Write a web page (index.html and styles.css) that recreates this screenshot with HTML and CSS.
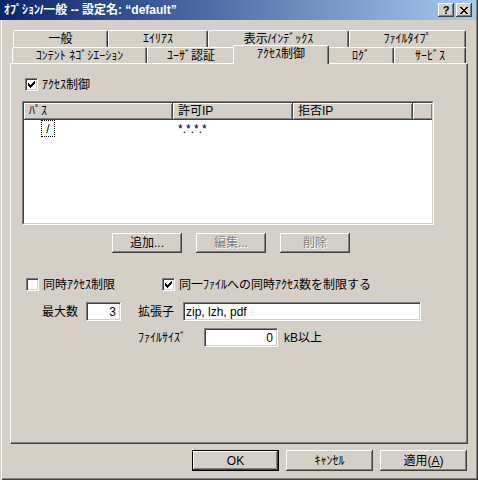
FILE: index.html
```html
<!DOCTYPE html>
<html lang="ja">
<head>
<meta charset="utf-8">
<title>ｵﾌﾟｼｮﾝ/一般</title>
<link rel="stylesheet" href="styles.css">
</head>
<body>
<div class="window">
  <div class="titlebar">
    <span class="title">ｵﾌﾟｼｮﾝ/一般 -- 設定名: “default”</span>
    <div class="tbtns">
      <span class="tbtn">?</span>
      <span class="tbtn"><svg width="8" height="7" viewBox="0 0 8 7" shape-rendering="crispEdges"><path fill="#000" d="M0 0h2v1H0zM6 0h2v1H6zM1 1h2v1H1zM5 1h2v1H5zM2 2h4v1H2zM3 3h2v1H3zM2 4h4v1H2zM1 5h2v1H1zM5 5h2v1H5zM0 6h2v1H0zM6 6h2v1H6z"/></svg></span>
    </div>
  </div>

  <div class="tabs">
    <div class="tabrow row1">
      <div class="tab t-general">一般</div>
      <div class="tab t-alias">ｴｲﾘｱｽ</div>
      <div class="tab t-index">表示/ｲﾝﾃﾞｯｸｽ</div>
      <div class="tab t-ftype">ﾌｧｲﾙﾀｲﾌﾟ</div>
    </div>
    <div class="tabrow row2">
      <div class="tab t-nego">ｺﾝﾃﾝﾄ ﾈｺﾞｼｴｰｼｮﾝ</div>
      <div class="tab t-auth">ﾕｰｻﾞ認証</div>
      <div class="tab t-access selected">ｱｸｾｽ制御</div>
      <div class="tab t-log">ﾛｸﾞ</div>
      <div class="tab t-service">ｻｰﾋﾞｽ</div>
    </div>
  </div>

  <div class="panel">
    <div class="chkrow access-row">
      <span class="box"><svg width="9" height="9" viewBox="0 0 9 9" shape-rendering="crispEdges"><path fill="#000" d="M1 3h1v3H1zM2 4h1v3H2zM3 5h1v3H3zM4 4h1v3H4zM5 3h1v3H5zM6 2h1v3H6zM7 1h1v3H7z"/></svg></span>
      <span>ｱｸｾｽ制御</span>
    </div>

    <div class="listview">
      <div class="lv-in">
        <div class="lv-head">
          <div class="hcol c1">ﾊﾟｽ</div>
          <div class="hcol c2">許可IP</div>
          <div class="hcol c3">拒否IP</div>
          <div class="hcol c4"></div>
        </div>
        <div class="lv-row">
          <div class="cell c1"><span class="focus">/</span></div>
          <div class="cell c2">*.*.*.*</div>
        </div>
      </div>
    </div>

    <div class="btnrow">
      <div class="btn small">追加...</div>
      <div class="btn small disabled">編集...</div>
      <div class="btn small disabled">削除</div>
    </div>

    <div class="optrow">
      <div class="opt opt1">
        <span class="box"></span>
        <span>同時ｱｸｾｽ制限</span>
      </div>
      <div class="opt">
        <span class="box"><svg width="9" height="9" viewBox="0 0 9 9" shape-rendering="crispEdges"><path fill="#000" d="M1 3h1v3H1zM2 4h1v3H2zM3 5h1v3H3zM4 4h1v3H4zM5 3h1v3H5zM6 2h1v3H6zM7 1h1v3H7z"/></svg></span>
        <span>同一ﾌｧｲﾙへの同時ｱｸｾｽ数を制限する</span>
      </div>
    </div>

    <div class="fieldrow">
      <span class="lbl lbl-max">最大数</span>
      <div class="field num f-max">3</div>
      <span class="lbl lbl-ext">拡張子</span>
      <div class="field f-ext">zip, lzh, pdf</div>
    </div>

    <div class="fieldrow row-size">
      <span class="lbl lbl-size">ﾌｧｲﾙｻｲｽﾞ</span>
      <div class="field num f-size">0</div>
      <span class="unit">kB以上</span>
    </div>
  </div>

  <div class="footer">
    <div class="btn big default">OK</div>
    <div class="btn big">ｷｬﾝｾﾙ</div>
    <div class="btn big">適用(<u>A</u>)</div>
  </div>
</div>
</body>
</html>
```

FILE: styles.css
```css
body {
  margin: 0;
  background: #d4d0c8;
  font: 12px/14px "Liberation Sans", "Noto Sans CJK JP", sans-serif;
  color: #000;
}

.window {
  width: 478px;
  height: 480px;
  box-sizing: border-box;
  background: #d4d0c8;
  overflow: hidden;
  display: flow-root;
  box-shadow: inset 1px 0 0 #d4d0c8, inset 2px 0 0 #fff,
              inset -1px -1px 0 #404040, inset -2px -2px 0 #808080;
}

/* title bar */
.titlebar {
  width: 476px;
  height: 20px;
  box-sizing: border-box;
  padding: 0 4px 0 4px;
  display: flex;
  align-items: center;
  background: linear-gradient(to right, #0a246a, #a6caf0);
  color: #fff;
  font-weight: bold;
}
.title { flex: 1; white-space: nowrap; }
.tbtns { display: flex; gap: 2px; }
.tbtn {
  width: 16px;
  height: 14px;
  box-sizing: border-box;
  display: flex;
  align-items: center;
  justify-content: center;
  background: #d4d0c8;
  color: #000;
  font: bold 11px/1 "Liberation Sans", sans-serif;
  box-shadow: inset -1px -1px 0 #404040, inset 1px 1px 0 #fff, inset -2px -2px 0 #808080;
}

/* tabs */
.tabs {
  margin-top: 10px;
  position: relative;
  z-index: 1;
}
.tabrow { display: flex; align-items: flex-start; }
.row1 { margin-left: 13px; height: 17px; }
.row2 { margin-left: 12px; height: 16px; }
.tab {
  box-sizing: border-box;
  display: flex;
  align-items: center;
  justify-content: center;
  white-space: nowrap;
  background: #d4d0c8;
  border-top: 1px solid #fff;
  border-left: 1px solid #fff;
  border-right: 1px solid #404040;
  border-radius: 2px 2px 0 0;
  box-shadow: inset -1px 0 0 #808080;
}
.row1 .tab { height: 17px; }
.row2 .tab { height: 16px; }
.t-general { width: 95px; }
.t-alias { width: 100px; }
.t-index { width: 141px; }
.t-ftype { width: 117px; }
.t-nego { width: 135px; }
.t-auth { width: 88px; }
.t-access { width: 93px; }
.t-log { width: 66px; }
.t-service { width: 72px; }
.row2 .tab.selected {
  width: 96px;
  height: 19px;
  margin: -2px -1px 0 -2px;
  padding-bottom: 2px;
  position: relative;
  z-index: 2;
}

/* panel */
.panel {
  margin-left: 10px;
  width: 458px;
  height: 381px;
  box-sizing: border-box;
  display: flow-root;
  border-top: 1px solid #fff;
  border-left: 1px solid #fff;
  border-right: 1px solid #404040;
  border-bottom: 1px solid #404040;
  box-shadow: inset -1px -1px 0 #808080;
}

.chkrow {
  display: flex;
  align-items: center;
  height: 13px;
  margin: 14px 0 0 14px;
  white-space: nowrap;
}
.box {
  flex: none;
  width: 13px;
  height: 13px;
  box-sizing: border-box;
  padding: 1px;
  margin-right: 4px;
  background: #fff;
  border: 1px solid;
  border-color: #808080 #fff #fff #808080;
  box-shadow: inset 1px 1px 0 #404040, inset -1px -1px 0 #d4d0c8;
}
.box svg { display: block; }

/* list view */
.listview {
  margin: 10px 0 0 11px;
  width: 412px;
  height: 124px;
  box-sizing: border-box;
  border: 1px solid;
  border-color: #808080 #fff #fff #808080;
}
.lv-in {
  height: 100%;
  box-sizing: border-box;
  border: 1px solid;
  border-color: #404040 #d4d0c8 #d4d0c8 #404040;
  background: #fff;
}
.lv-head { display: flex; height: 17px; }
.hcol {
  box-sizing: border-box;
  height: 17px;
  padding-left: 5px;
  display: flex;
  align-items: center;
  background: #d4d0c8;
  border-right: 1px solid #404040;
  border-bottom: 1px solid #404040;
  box-shadow: inset 1px 1px 0 #fff, inset -1px -1px 0 #808080;
  white-space: nowrap;
}
.hcol.c1 { width: 149px; }
.hcol.c2 { width: 120px; }
.hcol.c3 { width: 120px; }
.hcol.c4 { flex: 1; border-right: 0; }
.lv-row { display: flex; height: 17px; align-items: center; }
.cell { box-sizing: border-box; white-space: nowrap; }
.cell.c1 { width: 149px; padding-left: 17px; display: flex; }
.cell.c2 { padding-left: 5px; }
.focus {
  display: inline-flex;
  width: 14px;
  height: 17px;
  box-sizing: border-box;
  border: 1px dotted #000;
  align-items: center;
  justify-content: center;
}

/* buttons */
.btn {
  box-sizing: border-box;
  display: flex;
  align-items: center;
  justify-content: center;
  white-space: nowrap;
  background: #d4d0c8;
  box-shadow: inset -1px -1px 0 #404040, inset 1px 1px 0 #fff, inset -2px -2px 0 #808080;
}
.btn.disabled { color: #808080; text-shadow: 1px 1px 0 #fff; }
.btnrow {
  display: flex;
  gap: 14px;
  margin: 8px 0 0 101px;
}
.btn.small { width: 70px; height: 20px; }

/* options */
.optrow {
  display: flex;
  align-items: center;
  height: 13px;
  margin: 25px 0 0 15px;
}
.opt { display: flex; align-items: center; white-space: nowrap; }
.opt1 { width: 136px; }

.fieldrow {
  display: flex;
  align-items: center;
  height: 19px;
  margin-top: 11px;
  white-space: nowrap;
}
.row-size { margin-top: 7px; }
.lbl { flex: none; }
.lbl-max { margin-left: 31px; width: 44px; }
.lbl-ext { margin-left: 17px; width: 45px; }
.lbl-size { margin-left: 127px; width: 66px; }
.field {
  flex: none;
  height: 19px;
  box-sizing: border-box;
  display: flex;
  align-items: center;
  padding: 0 1px 0 2px;
  background: #fff;
  border: 1px solid;
  border-color: #808080 #fff #fff #808080;
  box-shadow: inset 1px 1px 0 #404040, inset -1px -1px 0 #d4d0c8;
}
.field.num { justify-content: flex-end; padding-right: 4px; }
.f-max { width: 35px; }
.f-ext { width: 238px; }
.f-size { width: 74px; }
.unit { margin-left: 6px; }

/* footer */
.footer {
  display: flex;
  gap: 7px;
  margin: 6px 0 0 192px;
}
.btn.big { width: 87px; height: 21px; }
.btn.default { border: 1px solid #000; }
```
